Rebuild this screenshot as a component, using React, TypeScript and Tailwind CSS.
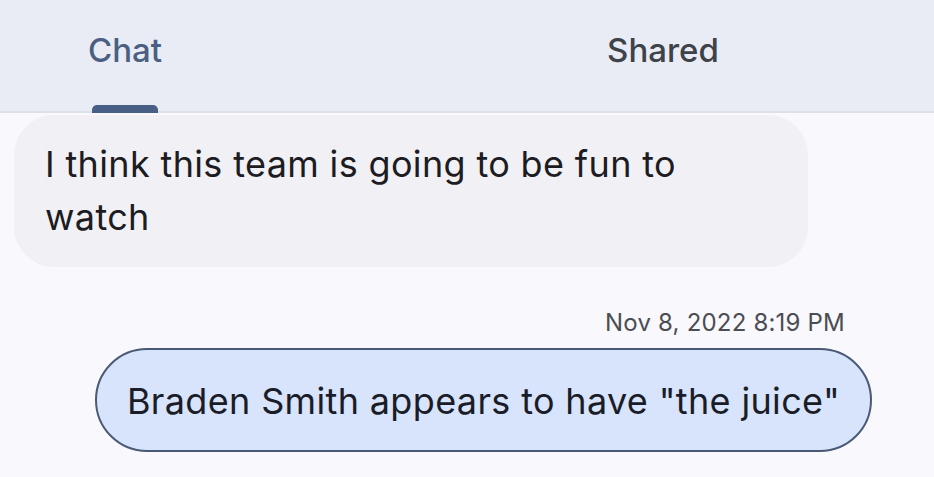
export default function App() {
  return (
    <div className="w-[934px] h-[477px] overflow-hidden bg-[#f8f8fd] font-['Inter',sans-serif]">
      {/* Tabs */}
      <div className="relative h-[113px] bg-[#e9ecf4] border-b-2 border-[#dde0e8]">
        <div className="flex h-full items-start pt-[30px]">
          <div className="w-[250px] flex justify-center">
            <span className="text-[33px] leading-[40px] font-medium text-[#4a5f82]">Chat</span>
          </div>
          <div className="ml-[288px] w-[250px] flex justify-center">
            <span className="text-[33px] leading-[40px] font-medium text-[#3e4249]">Shared</span>
          </div>
        </div>
        <div className="absolute left-[92px] bottom-[-2px] w-[66px] h-[8px] rounded-t-[5px] bg-[#475f85]" />
      </div>

      {/* Messages */}
      <div className="px-[14px] pt-[2px]">
        <div className="w-[794px] rounded-[40px] bg-[#f1f0f4] pl-[31px] pr-[20px] pt-[23px] pb-[23px] text-[36px] leading-[53px] tracking-[0.35px] text-[#1c1c22]">
          I think this team is going to be fun to watch
        </div>

        <div className="mt-[40px] pr-[75px] text-right text-[24px] leading-[32px] tracking-[0.2px] text-[#4b4d52]">
          Nov 8, 2022 8:19 PM
        </div>

        <div className="flex justify-end pr-[48px] mt-[9px]">
          <div className="rounded-full border-2 border-[#4b5a74] bg-[#d8e3fc] px-[30px] pt-[24px] pb-[22px] text-[36px] leading-[54px] tracking-[0.35px] text-[#1a1d27]">
            Braden Smith appears to have "the juice"
          </div>
        </div>
      </div>
    </div>
  );
}
